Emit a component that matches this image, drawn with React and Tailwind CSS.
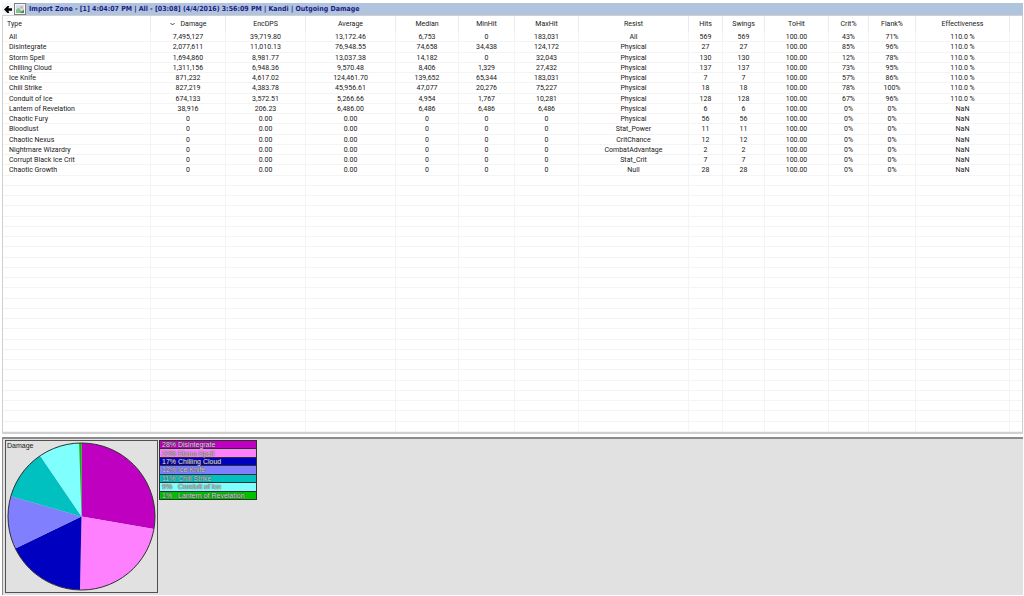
import { useState } from "react";
import clsx from "clsx";

const columns = [
  { key: "type", label: "Type", width: "w-[148px]" },
  { key: "damage", label: "Damage", width: "w-[75px]" },
  { key: "encdps", label: "EncDPS", width: "w-[80px]" },
  { key: "average", label: "Average", width: "w-[90px]" },
  { key: "median", label: "Median", width: "w-[63px]" },
  { key: "minhit", label: "MinHit", width: "w-[56px]" },
  { key: "maxhit", label: "MaxHit", width: "w-[64px]" },
  { key: "resist", label: "Resist", width: "w-[110px]" },
  { key: "hits", label: "Hits", width: "w-[34px]" },
  { key: "swings", label: "Swings", width: "w-[42px]" },
  { key: "tohit", label: "ToHit", width: "w-[64px]" },
  { key: "crit", label: "Crit%", width: "w-[40px]" },
  { key: "flank", label: "Flank%", width: "w-[47px]" },
  { key: "effectiveness", label: "Effectiveness", width: "w-[94px]" },
];

const rows = [
  ["All", "7,495,127", "39,719.80", "13,172.46", "6,753", "0", "183,031", "All", "569", "569", "100.00", "43%", "71%", "110.0 %"],
  ["Disintegrate", "2,077,611", "11,010.13", "76,948.55", "74,658", "34,438", "124,172", "Physical", "27", "27", "100.00", "85%", "96%", "110.0 %"],
  ["Storm Spell", "1,694,860", "8,981.77", "13,037.38", "14,182", "0", "32,043", "Physical", "130", "130", "100.00", "12%", "78%", "110.0 %"],
  ["Chilling Cloud", "1,311,156", "6,948.36", "9,570.48", "8,406", "1,329", "27,432", "Physical", "137", "137", "100.00", "73%", "95%", "110.0 %"],
  ["Ice Knife", "871,232", "4,617.02", "124,461.70", "139,652", "65,344", "183,031", "Physical", "7", "7", "100.00", "57%", "86%", "110.0 %"],
  ["Chill Strike", "827,219", "4,383.78", "45,956.61", "47,077", "20,276", "75,227", "Physical", "18", "18", "100.00", "78%", "100%", "110.0 %"],
  ["Conduit of Ice", "674,133", "3,572.51", "5,266.66", "4,954", "1,767", "10,281", "Physical", "128", "128", "100.00", "67%", "96%", "110.0 %"],
  ["Lantern of Revelation", "38,916", "206.23", "6,486.00", "6,486", "6,486", "6,486", "Physical", "6", "6", "100.00", "0%", "0%", "NaN"],
  ["Chaotic Fury", "0", "0.00", "0.00", "0", "0", "0", "Physical", "56", "56", "100.00", "0%", "0%", "NaN"],
  ["Bloodlust", "0", "0.00", "0.00", "0", "0", "0", "Stat_Power", "11", "11", "100.00", "0%", "0%", "NaN"],
  ["Chaotic Nexus", "0", "0.00", "0.00", "0", "0", "0", "CritChance", "12", "12", "100.00", "0%", "0%", "NaN"],
  ["Nightmare Wizardry", "0", "0.00", "0.00", "0", "0", "0", "CombatAdvantage", "2", "2", "100.00", "0%", "0%", "NaN"],
  ["Corrupt Black Ice Crit", "0", "0.00", "0.00", "0", "0", "0", "Stat_Crit", "7", "7", "100.00", "0%", "0%", "NaN"],
  ["Chaotic Growth", "0", "0.00", "0.00", "0", "0", "0", "Null", "28", "28", "100.00", "0%", "0%", "NaN"],
];

// Empty grid lines below the data
const emptyRows = Array.from({ length: 25 }, (_, i) => i);

const slices = [
  { name: "Disintegrate", value: 2077611, percent: "28%", fill: "#c000c0", bg: "bg-[#c000c0]" },
  { name: "Storm Spell", value: 1694860, percent: "23%", fill: "#ff80ff", bg: "bg-[#ff80ff]" },
  { name: "Chilling Cloud", value: 1311156, percent: "17%", fill: "#0000c0", bg: "bg-[#0000c0]" },
  { name: "Ice Knife", value: 871232, percent: "12%", fill: "#8080ff", bg: "bg-[#8080ff]" },
  { name: "Chill Strike", value: 827219, percent: "11%", fill: "#00c0c0", bg: "bg-[#00c0c0]" },
  { name: "Conduit of Ice", value: 674133, percent: "9%", fill: "#80ffff", bg: "bg-[#80ffff]" },
  { name: "Lantern of Revelation", value: 38916, percent: "1%", fill: "#00c000", bg: "bg-[#00c000]" },
];

const CENTER = 74.5;
const RADIUS = 73.5;

const pointAt = (fraction) => {
  const angle = fraction * 2 * Math.PI;
  return `${CENTER + RADIUS * Math.sin(angle)} ${CENTER - RADIUS * Math.cos(angle)}`;
};

const TitleBar = () => (
  <header className="flex h-3 items-center bg-[#b0c4de]">
    <button aria-label="Back" className="h-3 w-3 bg-[#f4f6fa] p-px">
      <svg viewBox="0 0 10 10" className="h-full w-full">
        <path
          d="M1 5.5 L4.5 2 H6.2 L5.4 4.3 H9 V6.7 H5.4 L6.2 9 H4.5 Z"
          fill="#000"
        />
      </svg>
    </button>
    <button
      aria-label="Show graph"
      className="h-3 w-3 border border-[#808080] bg-[#f4f6fa]"
    >
      <svg viewBox="0 0 10 10" className="h-full w-full">
        <rect x="1" y="1" width="8" height="8" fill="#cfe0f5" />
        <path d="M1 9 V6 L3.5 3.5 L5.5 6 L9 9 Z" fill="#8cbf86" />
        <circle cx="6.5" cy="3.5" r="1.3" fill="#e6a58a" />
        <path d="M5 9 L9 5.5 V9 Z" fill="#4a8a50" />
      </svg>
    </button>
    <h1 className="ml-[3px] whitespace-nowrap font-['DejaVu_Sans_Condensed','DejaVu_Sans',sans-serif] text-[7px] leading-3 font-bold text-[#1c1c84]">
      Import Zone - [1] 4:04:07 PM | All - [03:08] (4/4/2016) 3:56:09 PM | Kandi
      | Outgoing Damage
    </h1>
  </header>
);

const DamageTable = ({ sortKey, onSort }) => (
  <div className="min-h-0 flex-1 border-x border-t border-b-2 border-[#d0d0d0] bg-white">
    <table className="h-full w-full table-fixed border-separate border-spacing-0 text-center">
      <colgroup>
        {columns.map((col) => (
          <col key={col.key} className={col.width} />
        ))}
        <col className="w-[12px]" />
      </colgroup>
      <thead>
        <tr className="h-4">
          {columns.map((col, i) => (
            <th
              key={col.key}
              scope="col"
              className="h-4 border-r border-[#ebebeb] p-0 align-top font-normal"
            >
              <button
                onClick={() => onSort(col.key)}
                className={clsx(
                  "flex h-4 w-full items-center gap-1.5",
                  i === 0 ? "justify-start pl-1" : "justify-center"
                )}
              >
                {sortKey === col.key && (
                  <svg viewBox="0 0 5 4" className="h-1 w-[5px]">
                    <path d="M0.5 1 L2.5 3 L4.5 1" fill="none" stroke="#444" />
                  </svg>
                )}
                {col.label}
              </button>
            </th>
          ))}
          <td className="p-0" />
        </tr>
      </thead>
      <tbody>
        {rows.map((row) => (
          <tr key={row[0]}>
            {row.map((value, i) => (
              <td
                key={columns[i].key}
                className={clsx(
                  "border-r border-b border-[#f4f4f4] p-0 pt-px leading-2 whitespace-nowrap",
                  i === 0 && "pl-1.5 text-left"
                )}
              >
                {value}
              </td>
            ))}
            <td className="border-b border-[#f4f4f4] p-0" />
          </tr>
        ))}
        {emptyRows.map((n) => (
          <tr key={n}>
            {columns.map((col) => (
              <td key={col.key} className="border-r border-b border-[#f4f4f4] p-0">
                &nbsp;
              </td>
            ))}
            <td className="border-b border-[#f4f4f4] p-0" />
          </tr>
        ))}
      </tbody>
    </table>
  </div>
);

const PieChart = () => {
  const total = slices.reduce((sum, s) => sum + s.value, 0);
  let start = 0;

  return (
    <svg viewBox="0 0 149 149" className="h-[149px] w-[149px]">
      {slices.map((slice) => {
        const end = start + slice.value / total;
        const d = `M${CENTER} ${CENTER} L${pointAt(start)} A${RADIUS} ${RADIUS} 0 0 1 ${pointAt(end)} Z`;
        start = end;
        return <path key={slice.name} d={d} fill={slice.fill} />;
      })}
      <circle cx={CENTER} cy={CENTER} r={RADIUS} fill="none" stroke="#303030" />
    </svg>
  );
};

const Legend = () => (
  <ul className="flex h-[60px] w-[98px] flex-col border border-b-0 border-[#303030] text-[7px] leading-none text-[#d8d8d8]">
    {slices.map((slice) => (
      <li
        key={slice.name}
        className={clsx(
          "flex flex-1 items-center border-b border-[#303030] pl-0.5 whitespace-nowrap [text-shadow:0_0_1px_#303030,0_0_1px_#505050]",
          slice.bg
        )}
      >
        <span className="w-4">{slice.percent}</span>
        <span>{slice.name}</span>
      </li>
    ))}
  </ul>
);

const App = () => {
  const [sortKey, setSortKey] = useState("damage");

  return (
    <div className="flex h-screen flex-col bg-white px-px pt-[3px] pb-px pl-0.5 font-['Liberation_Sans',Arial,sans-serif] text-[#202020]">
      <TitleBar />
      <main className="flex min-h-0 flex-1 flex-col gap-[3px] font-[Roboto,Arial,sans-serif] text-[7px] leading-[9px]">
        <DamageTable sortKey={sortKey} onSort={setSortKey} />
        <section className="flex h-[158px] items-start gap-px border-t-2 border-l border-[#8c8c8c] bg-[#e1e1e1] pt-px pl-0.5 font-['Liberation_Sans',Arial,sans-serif]">
          <figure className="relative border border-[#505050] p-px">
            <figcaption className="absolute top-px left-px text-[7px] leading-2">
              Damage
            </figcaption>
            <PieChart />
          </figure>
          <Legend />
        </section>
      </main>
    </div>
  );
};

export default App;
